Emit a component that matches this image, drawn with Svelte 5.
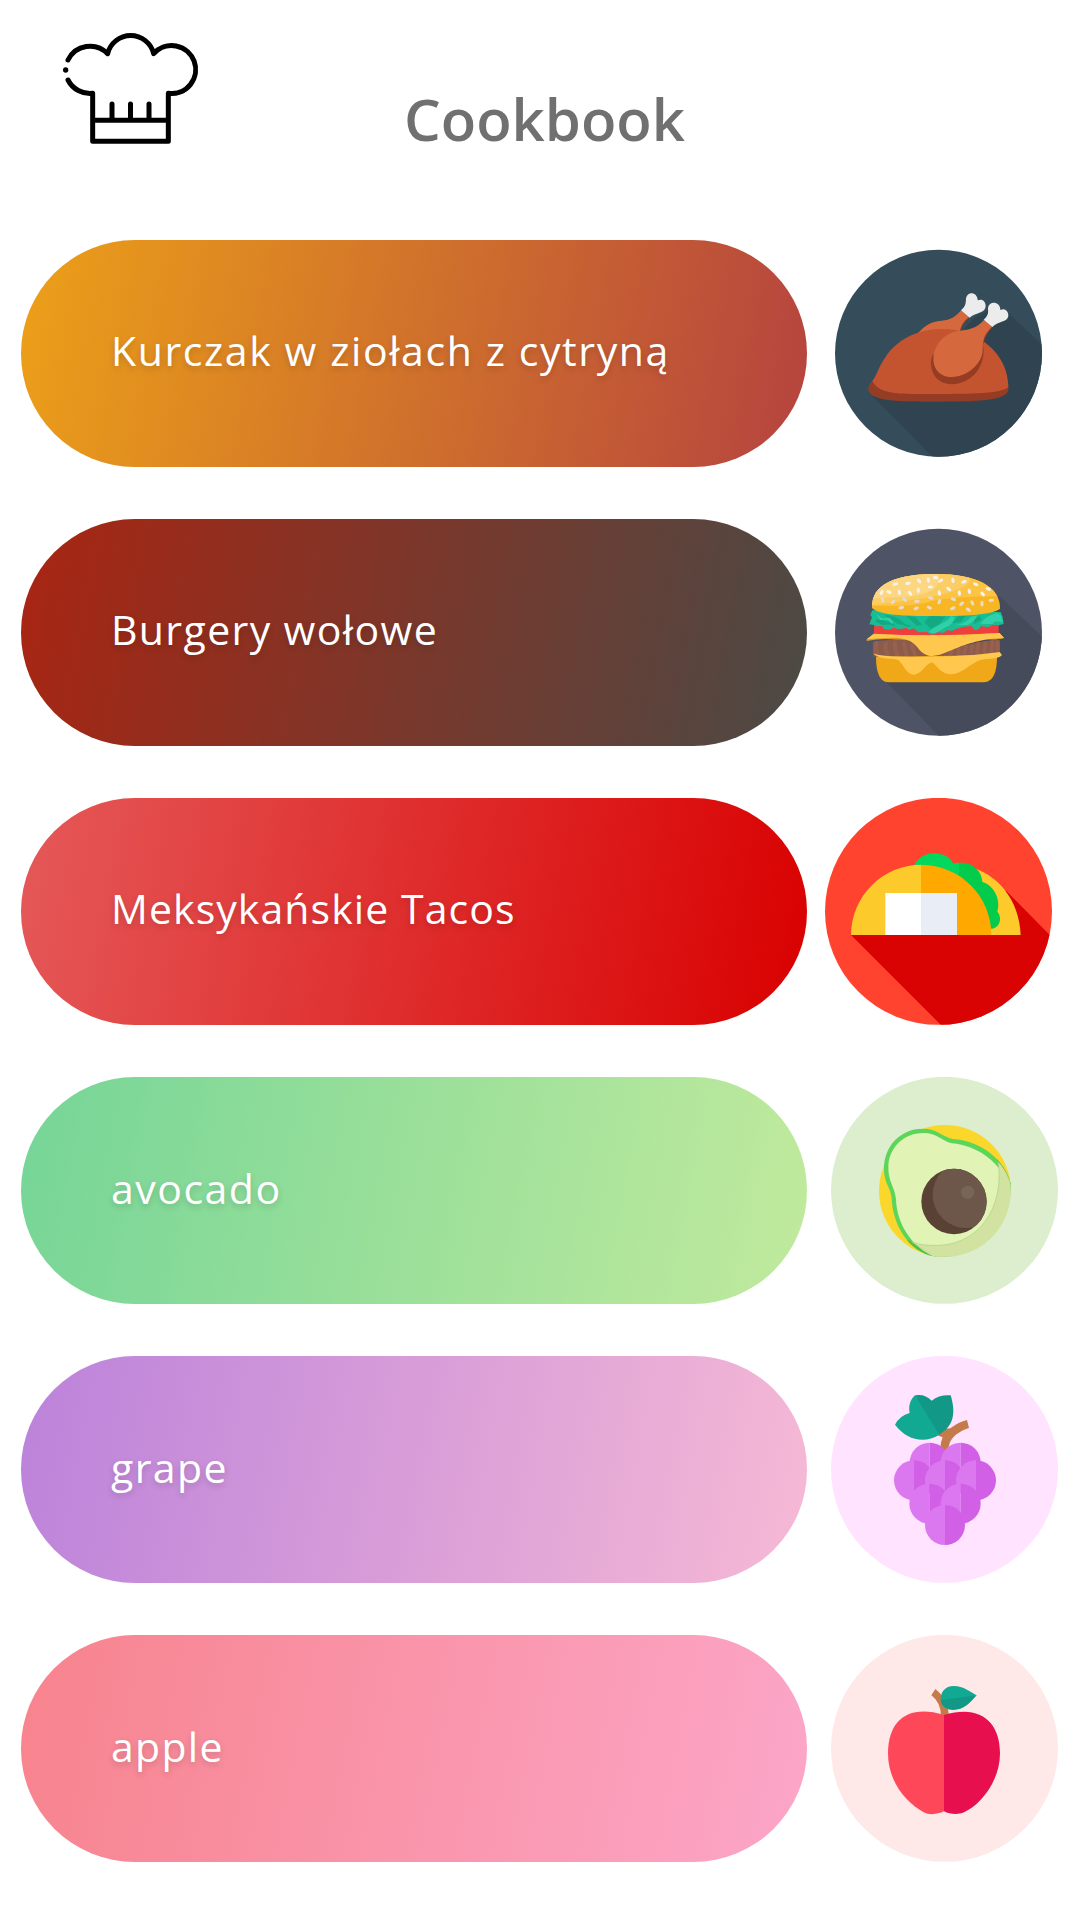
<script>
  // `spacing` is the label's tracking in pixels.
  const recipes = [
    { id: 'chicken', name: 'Kurczak w ziołach z cytryną', spacing: 1.59 },
    { id: 'burger', name: 'Burgery wołowe', spacing: 1.37 },
    { id: 'taco', name: 'Meksykańskie Tacos', spacing: 1.07 },
    { id: 'avocado', name: 'avocado', spacing: 1.5 },
    { id: 'grape', name: 'grape', spacing: 1.4 },
    { id: 'apple', name: 'apple', spacing: 1.3 }
  ];

  // Icon viewports share a width; each starts at its own vertical offset.
  const tops = { chicken: 30, burger: 27, taco: 39, avocado: 36, grape: 33, apple: 30 };

  const seeds = [
    [241, 222, -15], [279, 220, -10], [312, 213, 50], [340, 210, 80], [362, 203, 10], [377, 212, -30],
    [414, 211, 80], [447, 215, -20], [482, 223, 20], [520, 237, 20], [200, 247, -60], [222, 246, 25],
    [253, 247, 80], [285, 250, 50], [310, 241, 90], [346, 231, 0], [401, 237, 35], [373, 249, 80],
    [433, 249, 80], [463, 244, 80], [503, 252, 45], [203, 270, 70], [234, 276, -40], [269, 269, 40],
    [306, 274, -5], [347, 264, 15], [373, 275, -70], [415, 268, 20], [440, 281, -35], [472, 279, 60],
    [501, 281, 90], [529, 271, -5], [259, 293, -10], [304, 295, -20], [343, 293, 25], [413, 295, -25],
    [460, 299, 35]
  ];

  const grapes = [
    [344, 353], [437, 353], [297, 406], [390, 406], [483, 406], [343, 476], [437, 476], [390, 540]
  ];
</script>

<main>
  <header>
    <svg class="hat" viewBox="0 0 540 450" aria-hidden="true">
      <path d="M84 150A73.500 73.500 0 0 1 203 131A71 71 0 0 1 341 131A72 72 0 1 1 385 250V394H158V250A74 74 0 0 1 84 210M158 331H385M216 331V282M271.500 331V282M327 331V282" />
      <circle cx="77" cy="180" r="8" />
    </svg>
    <h1>Cookbook</h1>
  </header>

  <ul>
    {#each recipes as recipe}
      <li>
        <div class="pill {recipe.id}" style:letter-spacing="{recipe.spacing}px"><span>{recipe.name}</span></div>
        <svg class="icon" viewBox="0 {tops[recipe.id]} 795 681" aria-hidden="true">
          {#if recipe.id === 'chicken'}
            <clipPath id="chicken-disc"><circle cx="370.500" cy="370" r="310.500" /></clipPath>
            <circle cx="370.500" cy="370" r="310.500" fill="#354d5a" />
            <path clip-path="url(#chicken-disc)" d="M172 498L354 682H700V362L572 242L500 330L300 400Z" fill="#2f4450" />
            <path d="M437 302C441 286 449 275 465 261L448 247L425 290Z" fill="#943c24" />
            <path d="M309 309C327 289 346 274 380 272C407 271 421 260 439 241L462 261C445 275 439 286 435 302L400 320Z" fill="#d5683d" />
            <path d="M446 300C464 277 481 257 507 250L525 236L510 275C498 291 482 299 446 300Z" fill="#2f4450" />
            <path d="M172 453C157 466 157 483 167 492C190 512 245 515 350 515C465 515 580 516 580 478V464L300 430Z" fill="#943c24" />
            <path d="M172 453C187 433 190 412 210 383C245 330 305 297 380 297C490 297 580 370 580 472C555 492 470 492 365 492C260 492 194 496 172 453Z" fill="#c45330" />
            <path d="M354 374C344 390 346 425 364 444C398 480 464 459 489 420C506 393 508 365 504 345C509 324 518 307 533 291L510 290Z" fill="#943c24" />
            <path d="M507 270C485 294 463 299 435 302C395 304 363 337 356 374C350 414 373 441 411 441C459 440 502 400 503 361C504 325 507 314 531 290Z" fill="#d5683d" />
            <path d="M438 241C455 227 452 216 453 205C458 181 488 187 488 211C501 205 512 213 512 228C511 251 484 246 464 263Z" fill="#ececec" />
            <path d="M506 269C523 254 519 243 519 233C523 211 556 214 556 240C569 232 581 244 580 258C576 279 551 271 532 291Z" fill="#ececec" />
          {:else if recipe.id === 'burger'}
            <clipPath id="burger-disc"><circle cx="370.500" cy="367" r="310.500" /></clipPath>
            <clipPath id="bun"><path d="M171 294C168 222 244 192 363 192C480 192 557 228 555 296C533 313 466 318 363 318C260 318 196 316 171 294Z" /></clipPath>
            <circle cx="370.500" cy="367" r="310.500" fill="#4f5366" />
            <path clip-path="url(#burger-disc)" d="M208 510L374 680H690V388L553 258L400 400Z" fill="#464b5b" />
            <path d="M177 340H551V372Q365 382 177 374Z" fill="#ee3e3e" />
            <path d="M172 301L166 315L171 322L163 343L178 345L184 349L201 348L208 358L224 359L236 353L249 357L262 356L275 353L281 360L296 355L311 367L337 366L350 375L361 367L387 368L398 359L410 364L423 357L447 350L470 348L477 360L488 359L499 348L520 352L533 344L551 346L566 342L563 322L557 306Z" fill="#18bd94" />
            <path d="M180 335Q190 321 203 330T226 331L241 349Q222 341 204 345ZM207 314Q244 317 261 334T291 344L280 351Q262 342 248 342ZM274 317L301 321L321 344L305 347ZM344 317L392 320L368 347L345 355L329 336ZM430 318L452 317L438 335L411 340ZM478 328L494 317L499 329L477 343Z" fill="#13a982" />
            <path d="M365 348Q401 333 407 318L419 321Q418 343 389 353L359 371L340 366ZM417 346Q454 341 468 320L487 316Q479 335 458 345ZM496 342Q508 320 545 309L557 315L564 337L541 334L532 342ZM184 312L201 325L224 323L236 337L231 341L216 329L195 330Z" fill="#2fd0aa" />
            <path d="M155 388L176 373Q365 381 553 369L567 384Q548 391 500 387L340 440Q272 369 155 393Z" fill="#de9c27" />
            <path d="M174 395Q172 421 176 440H553Q557 410 554 390Q505 390 445 407L346 438Q320 422 305 403C280 383 233 387 174 395Z" fill="#8d5b4a" />
            <path d="M185 399Q179 419 187 434M213 401Q208 424 218 433M240 400Q239 422 247 434M267 400Q271 422 274 435M291 406L300 435M411 422L406 434M431 418V434M452 411L448 430M471 409L469 427M490 401L486 427M511 399L508 425M532 397L529 423M547 397V419" stroke="#96614f" stroke-width="12" stroke-linecap="round" fill="none" />
            <path d="M155 388L176 371Q365 381 554 369L567 384C487 387 448 405 403 423C355 445 331 444 306 410C278 376 237 381 155 388Z" fill="#ffc74d" />
            <path d="M183 440Q183 517 222 517H507Q547 516 546 436Z" fill="#f0a818" />
            <path d="M175 430Q189 440 290 441Q460 440 554 426L561 435Q554 446 507 448C470 453 444 494 406 493C376 493 362 461 351 457C331 461 320 495 295 494C267 491 263 446 237 447Q184 446 175 430Z" fill="#ffc74d" />
            <g clip-path="url(#bun)">
              <path d="M160 180H565V325H160Z" fill="#f9b624" />
              <path d="M160 180H565V258Q390 260 340 276T160 286Z" fill="#fcc344" />
              <path d="M160 180H415C475 197 478 213 440 234C370 266 240 275 160 288Z" fill="#fccc65" />
              <path d="M160 180H363Q384 222 350 242C293 270 230 256 160 268Z" fill="#fdd681" />
              {#each seeds as [x, y, turn], i}
                <ellipse cx={x} cy={y} rx="8.500" ry="4.800" transform="rotate({turn} {x} {y})" fill={i < 21 ? '#f7f2e9' : '#e4dccd'} />
              {/each}
            </g>
          {:else if recipe.id === 'taco'}
            <clipPath id="taco-disc"><circle cx="370.500" cy="379" r="340.500" /></clipPath>
            <circle cx="370.500" cy="379" r="340.500" fill="#ff432f" />
            <path clip-path="url(#taco-disc)" d="M108 450L380 722H740V486L573 317L500 430Z" fill="#d90303" />
            <path d="M485 252C561 283 613 355 617 450H500Z" fill="#fdca2c" />
            <path d="M298 241C318 195 392 193 415 236L433 280H320Z" fill="#02d85c" />
            <path d="M415 236Q424 233 433 233V290L400 262Z" fill="#02d85c" />
            <path d="M433 233C474 231 501 258 502 291C539 301 558 347 547 380C565 401 551 431 529 431L490 400L433 275Z" fill="#03cc4c" />
            <path d="M318 239C203 239 108 334 108 450H318Z" fill="#fdca2c" />
            <path d="M318 239C436 240 529 333 529 450H318Z" fill="#ffa800" />
            <path d="M211 324H318V450H211Z" fill="#fff" />
            <path d="M318 324H426V450H318Z" fill="#e8edf6" />
          {:else if recipe.id === 'avocado'}
            <clipPath id="slice"><circle cx="390" cy="378" r="198" /></clipPath>
            <clipPath id="fruit"><path d="M325 191C255 190 207 245 207 310C207 363 231 365 231 415C239 490 288 571 373 576H450L588 500V360C571 284 499 228 414 222C380 214 367 191 325 191Z" /></clipPath>
            <clipPath id="stone"><circle cx="417" cy="409.500" r="98" /></clipPath>
            <circle cx="388.500" cy="376" r="340.500" fill="#dceecd" />
            <circle cx="390" cy="378" r="198" fill="#fcd72b" />
            <g clip-path="url(#fruit)">
              <path d="M200 180H590V580H200Z" fill="#5cd65a" />
              <path d="M541 265L600 280V390H575ZM275 523L300 590H380L325 545Z" fill="#4dc04a" />
              <path d="M325 204C263 204 220 252 220 307C220 358 244 367 244 418C251 485 294 547 358 576L588 580V374C560 292 486 241 411 235C375 225 367 204 325 204Z" fill="#e1f3b5" />
              <path clip-path="url(#slice)" d="M549 290C570 422 494 552 343 541Q311 540 290 530L340 565L358 576H588V358Q574 315 549 290Z" fill="#d2e2a0" stroke="#a9d184" stroke-width="2" />
            </g>
            <path d="M588 378A198 198 0 0 1 390 576H590Z" fill="#dceecd" />
            <circle cx="417" cy="409.500" r="98" fill="#594234" />
            <circle cx="453" cy="389" r="100" clip-path="url(#stone)" fill="#6d574a" />
            <circle cx="458" cy="382" r="20" fill="#796459" />
          {:else if recipe.id === 'grape'}
            <circle cx="388.500" cy="373" r="340.500" fill="#ffe3ff" />
            <path d="M376 308Q377 291 383 277L367 271L392 251L406 250Q431 231 456 225L462 249C434 258 405 277 402 303L390 322Z" fill="#c47b49" />
            <path d="M300 151C285 165 280 183 284 204Q254 212 240 239C276 286 328 297 373 269L354 216Z" fill="#12a992" />
            <path d="M300 151Q329 145 350 167Q374 148 407 151C423 205 417 242 373 269Z" fill="#119887" />
            {#each grapes as [x, y]}
              <path d="M{x} {y - 60}A60 60 0 0 0 {x} {y + 60}Z" fill="#dc78ef" />
              <path d="M{x} {y - 60}A60 60 0 0 1 {x} {y + 60}Z" fill="#d160e7" />
            {/each}
          {:else}
            <circle cx="388.500" cy="370" r="340.500" fill="#ffe9e8" />
            <path d="M349 211L361 192Q401 224 401 275H378Q378 232 349 211Z" fill="#c47b49" />
            <path d="M377 226C376 202 389 183 417 183C445 183 467 201 485 211L430 230Z" fill="#12a992" />
            <path d="M377 226L485 211C465 234 446 255 415 255C393 255 379 243 377 226Z" fill="#119887" />
            <path d="M387 270C281 237 219 285 219 385C219 472 275 533 326 562C343 571 369 568 387 559Z" fill="#ff475a" />
            <path d="M387 270C493 237 555 288 555 385C555 470 495 540 447 562C430 570 404 568 387 559Z" fill="#e70f4e" />
          {/if}
        </svg>
      </li>
    {/each}
  </ul>
</main>

<style>
  :global(body) {
    margin: 0;
    background: #fff;
  }

  main {
    width: 1080px;
    height: 1920px;
    overflow: hidden;
    font-family: 'Open Sans', 'Noto Sans', sans-serif;
  }

  header {
    display: flex;
    align-items: flex-start;
    height: 240px;
    padding-left: 40px;
    box-sizing: border-box;
  }

  .hat {
    width: 180px;
    height: 150px;
    margin-top: 10px;
    fill: none;
    stroke: #000;
    stroke-width: 15;
    stroke-linecap: round;
    stroke-linejoin: round;
  }

  .hat circle {
    fill: #000;
    stroke: none;
  }

  h1 {
    margin: 79px 0 0 184px;
    font-size: 58px;
    line-height: 80px;
    font-weight: 600;
    color: #707070;
  }

  ul {
    display: grid;
    gap: 52.100px;
    margin: 0;
    padding: 0;
    list-style: none;
  }

  li {
    display: grid;
    grid-template-columns: 785.500px 265px;
    column-gap: 8.500px;
    height: 227px;
    padding-left: 21px;
  }

  .pill {
    display: flex;
    align-items: center;
    height: 226.600px;
    padding: 0 0 6px 90px;
    box-sizing: border-box;
    border-radius: 114px;
    color: #fff;
    font-size: 41px;
    line-height: 56px;
    white-space: nowrap;
    text-shadow: 0 3px 6px rgba(0, 0, 0, 0.16);
  }

  .chicken {
    background: linear-gradient(101deg, #eca018, #b5433f);
  }
  .burger {
    background: linear-gradient(101deg, #a92512, #4b4a45);
  }
  .taco {
    background: linear-gradient(101deg, #e55959, #d90000);
  }
  .avocado {
    background: linear-gradient(101deg, #75d597, #c1ea9d);
  }
  .grape {
    background: linear-gradient(101deg, #bb82db, #f6b9d5);
  }
  .apple {
    background: linear-gradient(101deg, #f7838d, #fca6c8);
  }

  .icon {
    display: block;
    width: 265px;
    height: 227px;
  }
</style>
